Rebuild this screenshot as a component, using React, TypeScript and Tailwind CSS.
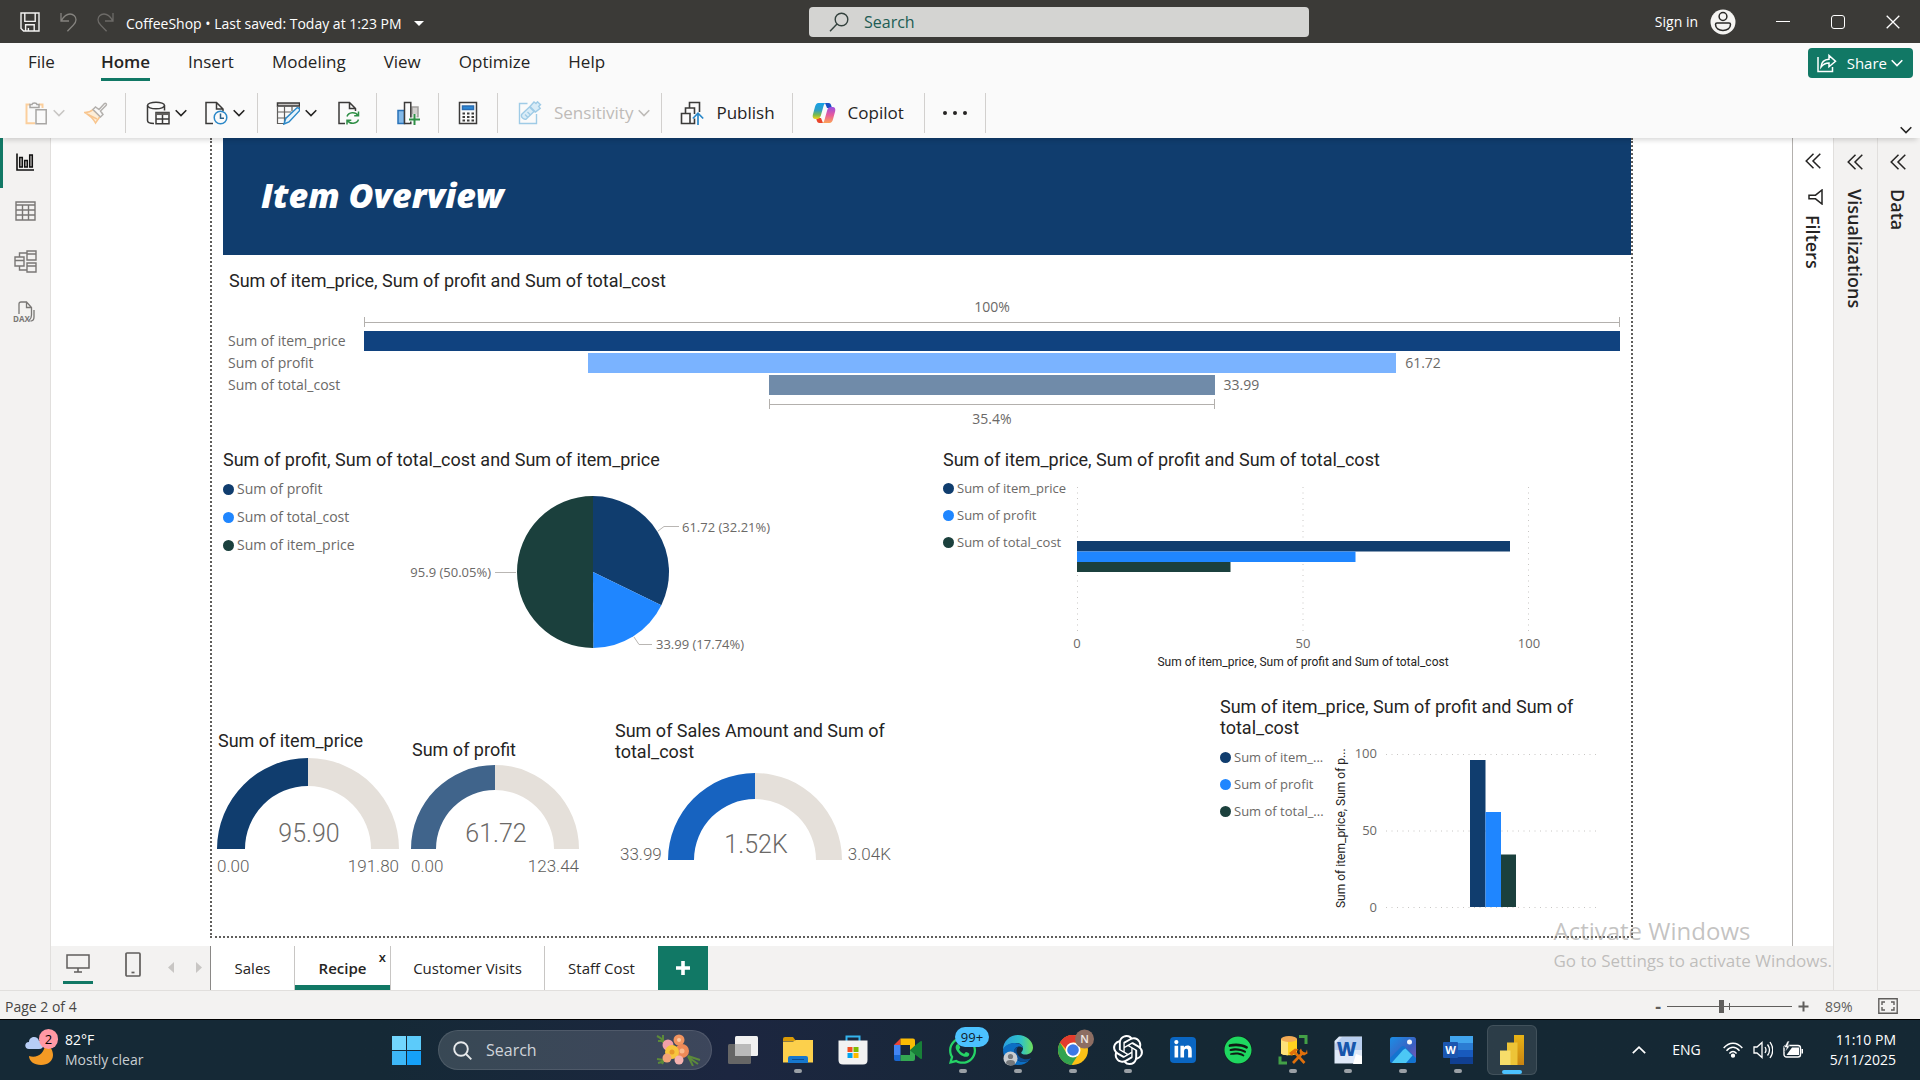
import React from "react";
import { FaSpotify, FaWhatsapp, FaLinkedinIn } from "react-icons/fa6";
import { SiOpenai } from "react-icons/si";

type Series = { label: string; value: number; fill: string };

const NAVY = "#103d6e";
const BLUE = "#1f86ff";
const GREEN = "#1b403d";

function Chevron({ className = "" }: { className?: string }) {
  return (
    <svg viewBox="0 0 12 8" className={`h-2 w-3 shrink-0 ${className}`} fill="none" stroke="currentColor" strokeWidth="1.6" aria-hidden="true">
      <path d="M.7 1.2 6 6.6l5.3-5.4" />
    </svg>
  );
}

function DoubleChevron() {
  return (
    <svg viewBox="0 0 16 16" className="size-4" fill="none" stroke="currentColor" strokeWidth="1.5" aria-hidden="true">
      <path d="M8.5.7 1.2 8l7.3 7.3M15.3.7 8 8l7.3 7.3" />
    </svg>
  );
}

function TitleBar() {
  return (
    <header className="flex h-[43px] shrink-0 items-center bg-[#3b3a37] text-white">
      <div className="flex min-w-0 flex-[789] items-center pl-5">
        <button aria-label="Save" className="size-5">
          <svg viewBox="0 0 20 20" className="size-5" fill="none" stroke="#f3f2f1" strokeWidth="1.4">
            <path d="M1 1h18v18H3.600L1 16.400zM4.800 1v8.400h10.400V1M5.600 19v-6.200h8.600V19M8.400 19v-3" />
          </svg>
        </button>
        <button aria-label="Undo" className="ml-5 h-5 w-[17px]">
          <svg viewBox="0 0 17 20" className="h-5 w-[17px]" fill="none" stroke="#85837f" strokeWidth="1.3">
            <path d="M1 1v8h8M1.300 8.600C4 4 6.800 2 10 2c3.600 0 6 2.600 6 5.700 0 2.400-1.200 3.900-2.800 5.500L7.400 19.300" />
          </svg>
        </button>
        <button aria-label="Redo" className="ml-5 h-5 w-[17px]">
          <svg viewBox="0 0 17 20" className="h-5 w-[17px]" fill="none" stroke="#6d6b68" strokeWidth="1.3">
            <path d="M16 1v8H8M15.700 8.600C13 4 10.200 2 7 2 3.400 2 1 4.600 1 7.700c0 2.400 1.200 3.900 2.800 5.500l5.800 6.100" />
          </svg>
        </button>
        <button className="ml-3 flex items-center gap-3 pt-1 text-[14px] whitespace-nowrap">
          CoffeeShop • Last saved: Today at 1:23 PM
          <svg viewBox="0 0 10 5" className="h-[5px] w-2.5" fill="#fff" aria-hidden="true"><path d="M0 0h10L5 5z" /></svg>
        </button>
      </div>
      <label className="flex h-[30px] min-w-0 flex-[480] items-center rounded-sm bg-[#d4d4d2] pl-5">
        <svg viewBox="0 0 20 20" className="size-5 shrink-0" fill="none" stroke="#33413d" strokeWidth="1.4" aria-hidden="true">
          <circle cx="12.500" cy="7.500" r="6.300" />
          <path d="M8 12 1 19.300" />
        </svg>
        <input aria-label="Search" placeholder="Search" className="ml-[15px] min-w-0 flex-1 bg-transparent text-[16px] outline-none placeholder:text-[#215c54]" />
      </label>
      <div className="flex min-w-0 flex-[591] items-center justify-end pr-5">
        <button className="flex items-center gap-3 text-[14px]">
          Sign in
          <svg viewBox="0 0 26 26" className="size-[26px]" aria-hidden="true">
            <circle cx="13" cy="13" r="12.500" fill="#f5f4f2" />
            <g fill="none" stroke="#2b2a28" strokeWidth="1.500">
              <circle cx="13" cy="7.500" r="3.900" />
              <path d="M7 14h12c1 0 1.500.6 1.500 1.600 0 3.600-3.300 6-7.500 6s-7.500-2.400-7.500-6C5.500 14.600 6 14 7 14z" />
            </g>
          </svg>
        </button>
        <button aria-label="Minimize" className="ml-10 h-3.5 w-3.5"><span className="block h-px bg-white" /></button>
        <button aria-label="Maximize" className="ml-[41px] h-3.5 w-3.5 rounded-[3px] border border-white" />
        <button aria-label="Close" className="ml-[41px] h-3.5 w-3.5">
          <svg viewBox="0 0 14 14" className="size-3.5" stroke="#fff" strokeWidth="1.300"><path d="m.7.7 12.600 12.600M13.300.7.7 13.300" /></svg>
        </button>
      </div>
    </header>
  );
}

function MenuBar() {
  const items = ["Insert", "Modeling", "View", "Optimize", "Help"];
  return (
    <nav className="flex h-12 items-start justify-between bg-[#fafafa] pr-[7px] pl-7 text-[#252423]">
      <div className="flex gap-[38px] pt-[5px] text-[17px] leading-7">
        <a href="#file">File</a>
        <a href="#home" className="ml-2 border-b-[3px] border-[#117865] pb-0.5 font-semibold">Home</a>
        {items.map((item) => (
          <a key={item} href={`#${item.toLowerCase()}`}>{item}</a>
        ))}
      </div>
      <button className="mt-[5px] flex h-[30px] items-center rounded bg-[#117865] pr-2.5 pl-[9px] text-[15px] text-white">
        <svg viewBox="0 0 20 20" className="size-5" fill="none" stroke="#fff" strokeWidth="1.500" aria-hidden="true">
          <path d="M1 4v14.500h14.500V14M4 14c.4-5 3.500-7.500 8-7.700V2.500l6.500 5.700L12 13.700V10c-3.400 0-5.800 1.200-8 4z" />
        </svg>
        <span className="ml-2.5">Share</span>
        <Chevron className="ml-1" />
      </button>
    </nav>
  );
}

const Sep = () => <span className="h-10 w-px shrink-0 bg-[#d2d0ce]" />;

function IconButton({ label, className = "", children, menu = false }: { label: string; className?: string; children: React.ReactNode; menu?: boolean }) {
  return (
    <button aria-label={label} className={`flex items-center gap-[5px] ${className}`}>
      <svg viewBox="0 0 24 24" className="size-6 shrink-0" fill="none" stroke="#3b3a39" strokeWidth="1.500">{children}</svg>
      {menu && <Chevron />}
    </button>
  );
}

function Ribbon() {
  return (
    <div className="relative z-10 flex h-[47px] shrink-0 items-center bg-[#fafafa] pb-1 pl-6 text-[17px] text-[#252423] shadow-[0_5px_5px_-3px_rgba(0,0,0,0.16)]">
      <IconButton label="Paste" menu className="text-[#c8c6c4]">
        <g stroke="#fbcf9d"><path d="M6 3.500H2.500v18.800H11" strokeWidth="2" /><path d="M15 3.500h3.500V7" strokeWidth="2" /></g>
        <path d="M6 6.500v-3h2c.3-2 4.600-2 5 0h2v3zM12 8.800h10.200v14H12z" stroke="#a8a6a4" fill="#fafafa" />
      </IconButton>
      <IconButton label="Format painter" className="mr-[17px] ml-[19px]">
        <path d="M.8 11.500c3.700 0 6-1 8.200-3l7 7-4.500 6.500c-2.500-5-6.200-8-10.700-10.500z" fill="#fdeed9" stroke="#f8c58e" />
        <path d="M4 13.500 13 18" stroke="#f8c58e" />
        <path d="m9 8.500 2.500-2.500 3.500 2.500L20.500 2.500c1-.8 2.500.6 1.700 1.700L16.500 10l2.500 3.500-2.500 2.500z" stroke="#b3b0ad" fill="#fafafa" />
      </IconButton>
      <Sep />
      <IconButton label="Get data" menu className="ml-5">
        <ellipse cx="10" cy="4.500" rx="8.500" ry="3.300" />
        <path d="M1.500 4.500v15c0 2 3 3 6.500 3M18.500 4.500v5" />
        <path d="M10 11.500h13v11.300H10z" fill="#fafafa" /><path d="M10 12.800h13" strokeWidth="2.500" stroke="#605e5c" /><path d="M10 18h13M16.500 14v9" />
      </IconButton>
      <IconButton label="Recent sources" menu className="mr-3 ml-[17px]">
        <path d="M9 22.500H2V1.500h10.500l6.500 6.500v2M12.500 1.500V8H19" />
        <circle cx="16.500" cy="16.500" r="6.300" stroke="#2b88c8" fill="#fafafa" /><path d="M16.500 12.500v4.700H20" stroke="#2b5f86" />
      </IconButton>
      <Sep />
      <IconButton label="Transform data" menu className="ml-[18px]">
        <path d="M1.500 2h22v3h-22z" fill="#c8c6c4" />
        <path d="M1.500 5v17.500h7M23.500 5v4M1.500 11h14M1.500 17H10M8.500 5v16M16 5v5" stroke="#605e5c" strokeWidth="1.200" />
        <path d="m8 23 1.700-5.500L20.500 7.200c1.700-1.300 4 .8 2.800 2.700L13 20.900z" stroke="#2b88c8" fill="#e8f4fc" />
      </IconButton>
      <IconButton label="Refresh" className="mr-4 ml-[19px]">
        <path d="M9 22.500H3V1.500h10.500l6 6V10M13.500 1.500v6h6" />
        <path d="M11 15.500c1.500-4.500 8.500-5 11-1M22.500 10.500v4.300h-4.300M22.500 18.500c-1.500 4.500-8.500 5-11 1M11 23.500v-4.300h4.300" stroke="#2f8f46" />
      </IconButton>
      <Sep />
      <IconButton label="New visual" className="mr-[18px] ml-[19px]">
        <path d="M16 6h6v10h-6z" fill="#d2d0ce" stroke="#a19f9d" />
        <path d="M2 9.500h6.500v13H2z" fill="#83b9e8" stroke="#2872b8" />
        <path d="M8.500 1.500h6.300v21H8.500z" fill="#fafafa" />
        <path d="M18.500 13v11M13 18.500h11" stroke="#fafafa" strokeWidth="4" /><path d="M18.500 13v11M13 18.500h11" stroke="#2f8f46" strokeWidth="2" />
      </IconButton>
      <Sep />
      <IconButton label="New measure" className="mx-[17px]">
        <path d="M3.500 1.500h17v21h-17z" /><path d="M6.500 5h11v3.500h-11z" fill="#2b88d8" stroke="#2b6cb0" />
        <path d="M6.500 12.500h2.500m2 0h2.500m2 0H18m-11.500 3.500H9m2 0h2.500m2 0H18m-11.500 3.500H9m2 0h2.500m2 0H18" strokeWidth="2" />
      </IconButton>
      <Sep />
      <button disabled className="mr-[11px] ml-5 flex items-center text-[#bebbb8]">
        <svg viewBox="0 0 24 24" className="size-6" fill="none" stroke="#9fcbe6" strokeWidth="1.400" aria-hidden="true">
          <path d="M9.500 2.500H1.500v20h17V13" />
          <path d="m4 13 7.500-7 4.500 4.500-7.500 7.300c-2.500 1.500-6.500-2-4.500-4.800zM12 5.500l4-4.500 2 1.500L19.500.800l3 3-1.800 1.500 1.500 2L17.500 11zM7 13.500l2.500 2.500m0-5 2.500 2.500" fill="#d9ecf7" />
        </svg>
        <span className="mr-[5px] ml-3">Sensitivity</span>
        <Chevron />
      </button>
      <Sep />
      <button className="mr-[17px] ml-[18px] flex items-center gap-3">
        <svg viewBox="0 0 24 24" className="size-6" fill="none" stroke="#3b3a39" strokeWidth="1.600" aria-hidden="true">
          <path d="M1.500 12.500h8.500v10H1.500zM5.500 12.500V7h9v6M9.500 7V1.500h10V11M10 22.500h4.500v-5" />
          <path d="M18 24V12.500M12.800 17.500l5.200-5.300 5.200 5.300" stroke="#2b88c8" strokeWidth="1.700" />
        </svg>
        Publish
      </button>
      <Sep />
      <button className="mr-5 ml-[19px] flex items-center gap-3">
        <svg viewBox="0 0 24 24" className="size-6" aria-hidden="true">
          <defs>
            <linearGradient id="cpa" x1="0" y1="0" x2="0" y2="1"><stop offset="0" stopColor="#16a0e8" /><stop offset=".45" stopColor="#2e9fc4" /><stop offset=".75" stopColor="#7dbb4a" /><stop offset="1" stopColor="#f7d21b" /></linearGradient>
            <linearGradient id="cpb" x1="0" y1="0" x2="0" y2="1"><stop offset="0" stopColor="#9a4fe0" /><stop offset=".5" stopColor="#e75a9c" /><stop offset="1" stopColor="#fca356" /></linearGradient>
          </defs>
          <path d="M13 2h3.500c1.800 0 2.400 1.300 2.900 3l.6 2H15z" fill="#1b4fc4" />
          <path d="M11 22H7.500c-1.800 0-2.400-1.300-2.900-3L4 17h5z" fill="#e8452c" />
          <path d="M6.500 2h7.300c-1.600.5-2 2-2.400 3.500l-2.600 9.300C8.200 16.800 7 18 5 18H3.500C1 18 .2 16 .9 13.500L3 5.800C3.700 3.300 4.700 2 6.500 2z" fill="url(#cpa)" />
          <path d="M17.500 22h-7.300c1.600-.5 2-2 2.400-3.500l2.600-9.300C15.800 7.200 17 6 19 6h1.500c2.500 0 3.300 2 2.600 4.500L21 18.200c-.7 2.500-1.700 3.800-3.500 3.800z" fill="url(#cpb)" />
        </svg>
        Copilot
      </button>
      <Sep />
      <button aria-label="More options" className="mx-[18px] flex w-6 justify-between">
        <i className="size-1 rounded-full bg-[#252423]" /><i className="size-1 rounded-full bg-[#252423]" /><i className="size-1 rounded-full bg-[#252423]" />
      </button>
      <Sep />
      <button aria-label="Collapse ribbon" className="mt-auto mr-2 ml-auto"><Chevron /></button>
    </div>
  );
}

function ViewRail() {
  return (
    <nav aria-label="Views" className="flex w-[51px] shrink-0 flex-col border-r border-[#e1dfdd] bg-[#f3f2f1]">
      <button aria-label="Report view" className="flex h-[50px] items-center border-l-[3px] border-[#117865] pb-0.5 pl-[13px]">
        <svg viewBox="0 0 18 18" className="size-[18px]" fill="#a19f9d" stroke="#111" strokeWidth="1.300">
          <path d="M1 .5V17h17" fill="none" strokeWidth="1.600" /><path d="M3.600 4.500h2.800V14H3.600zM8.600 7.500h2.800V14H8.600zM13.600 2h2.800v12h-2.800z" />
        </svg>
      </button>
      <button aria-label="Table view" className="flex h-[46px] items-center pl-[15px]">
        <svg viewBox="0 0 21 20" className="h-5 w-[21px]" fill="none" stroke="#797775" strokeWidth="1.400">
          <path d="M1 1h19v18H1zM1 4h19M1 9h19M1 14h19M7.500 4v15M13.500 4v15" />
        </svg>
      </button>
      <button aria-label="Model view" className="flex h-[54px] items-center pl-3.5">
        <svg viewBox="0 0 23 23" className="size-[23px]" fill="none" stroke="#797775" strokeWidth="1.400">
          <path d="M13 1h9v9h-9zM13 4h9M13 13h9v9h-9zM13 16h9M1 7h9v9H1zM1 10.500h9M5.500 7V3H13M5.500 16v4H13" />
        </svg>
      </button>
      <button aria-label="DAX query view" className="flex h-12 items-center pl-[13px]">
        <svg viewBox="0 0 22 22" className="size-[22px]" fill="none" stroke="#797775" strokeWidth="1.300">
          <path d="M6 13V3c0-1.200.8-2 2-2h5.500l5 5.500V14c0 2-.5 4-2.500 5.500M13.500 1v5.500h5M21 9v7c0 2-1 4-3.500 4" />
          <text x="0" y="20.500" fontSize="8" fontWeight="700" fill="#797775" stroke="none">DAX</text>
        </svg>
      </button>
    </nav>
  );
}

function VisualTitle({ children, className = "" }: { children: React.ReactNode; className?: string }) {
  return <h2 className={`font-['Roboto',sans-serif] text-[18px] leading-[21px] text-[#252423] ${className}`}>{children}</h2>;
}

function Bracket({ ratio }: { ratio: number }) {
  return (
    <div className="mx-auto flex h-2.5 items-center border-x border-[#b3b0ad]" style={{ width: `${ratio * 100}%` }}>
      <span className="h-px flex-1 bg-[#b3b0ad]" />
    </div>
  );
}

function Funnel() {
  const rows: Series[] = [
    { label: "Sum of item_price", value: 95.9, fill: "#10427f" },
    { label: "Sum of profit", value: 61.72, fill: "#7ab3ff" },
    { label: "Sum of total_cost", value: 33.99, fill: "#708ba9" },
  ];
  const max = rows[0].value;
  return (
    <section className="mt-[15px] pr-[11px] pl-4 text-[14px] leading-5 text-[#6b6967]">
      <VisualTitle className="pl-px">Sum of item_price, Sum of profit and Sum of total_cost</VisualTitle>
      <div className="mt-1.5 pl-[136px] text-center">100%</div>
      <div className="pl-[136px]"><Bracket ratio={1} /></div>
      <div className="my-1 flex flex-col gap-0.5">
        {rows.map((r, i) => (
          <div key={r.label} className="flex h-5 items-center">
            <span className="w-[136px] shrink-0 pb-px whitespace-nowrap">{r.label}</span>
            <div className="flex h-full flex-1">
              <span className="flex-1" />
              <span className="h-full" style={{ width: `${(r.value / max) * 100}%`, background: r.fill }} />
              <span className="flex-1">{i > 0 && <span className="ml-[9px]">{r.value}</span>}</span>
            </div>
          </div>
        ))}
      </div>
      <div className="pl-[136px]"><Bracket ratio={33.99 / max} /></div>
      <div className="pl-[136px] text-center">35.4%</div>
    </section>
  );
}

function Legend({ items, small = false, className = "" }: { items: [string, string][]; small?: boolean; className?: string }) {
  return (
    <ul className={`flex shrink-0 flex-col text-[#6b6967] ${small ? "gap-2 text-[13px] leading-[19px]" : "gap-2 text-[14px] leading-5"} ${className}`}>
      {items.map(([name, fill]) => (
        <li key={name} className="flex items-center gap-[3px] whitespace-nowrap">
          <i className="size-[11px] shrink-0 rounded-full" style={{ background: fill }} />
          {name}
        </li>
      ))}
    </ul>
  );
}

function PieVisual() {
  const slices: Series[] = [
    { label: "profit", value: 61.72, fill: NAVY },
    { label: "total_cost", value: 33.99, fill: BLUE },
    { label: "item_price", value: 95.9, fill: GREEN },
  ];
  const total = slices.reduce((s, x) => s + x.value, 0);
  const r = 76;
  let from = 0;
  return (
    <section>
      <VisualTitle>Sum of profit, Sum of total_cost and Sum of item_price</VisualTitle>
      <div className="mt-2 flex">
        <Legend className="w-[182px] pt-px" items={[["Sum of profit", NAVY], ["Sum of total_cost", BLUE], ["Sum of item_price", GREEN]]} />
        <svg viewBox="-188 -94 374 190" width="374" height="190" className="text-[13px]" fill="#6b6967" role="img" aria-label="Pie chart">
          {slices.map((s) => {
            const a = (from / total) * 2 * Math.PI;
            from += s.value;
            const b = (from / total) * 2 * Math.PI;
            const d = `M0 0L${r * Math.sin(a)} ${-r * Math.cos(a)}A${r} ${r} 0 ${b - a > Math.PI ? 1 : 0} 1 ${r * Math.sin(b)} ${-r * Math.cos(b)}Z`;
            return <path key={s.label} d={d} fill={s.fill} />;
          })}
          <g fill="none" stroke="#b9b6b3">
            <path d="M65-41l6-4.500h15M41 65l5 7.500h13M-98 .5h21" />
          </g>
          <text x="89" y="-40">61.72 (32.21%)</text>
          <text x="63" y="77">33.99 (17.74%)</text>
          <text x="-102" y="5" textAnchor="end">95.9 (50.05%)</text>
        </svg>
      </div>
    </section>
  );
}

function BarVisual() {
  return (
    <section>
      <VisualTitle>Sum of item_price, Sum of profit and Sum of total_cost</VisualTitle>
      <div className="mt-2 flex">
        <Legend small className="w-[124px] pt-px" items={[["Sum of item_price", NAVY], ["Sum of profit", BLUE], ["Sum of total_cost", GREEN]]} />
        <svg viewBox="-10 -1 490 192" width="490" height="192" className="text-[13px]" fill="#6b6967" textAnchor="middle" role="img" aria-label="Bar chart">
          <g stroke="#c8c6c4" strokeDasharray="1 4.500">
            <path d="M.5 8v145M226 8v145M451.500 8v145" />
          </g>
          <path d="M0 62h433v10.500H0z" fill={NAVY} />
          <path d="M0 72.500h278.500V83H0z" fill={BLUE} />
          <path d="M0 83h153.500v10H0z" fill={GREEN} />
          <text x="0" y="169">0</text>
          <text x="226" y="169">50</text>
          <text x="452" y="169">100</text>
          <text x="226" y="187" fill="#252423" className="font-['Roboto',sans-serif] text-[12px]">Sum of item_price, Sum of profit and Sum of total_cost</text>
        </svg>
      </div>
    </section>
  );
}

function GaugeArc({ r, inner, fill, value }: { r: number; inner: number; fill: string; value: string }) {
  return (
    <svg viewBox={`${-r} ${-r} ${2 * r} ${r}`} width={2 * r} height={r} className="shrink-0" role="img" aria-label={value}>
      <path d={`M${-r} 0A${r} ${r} 0 0 1 0 ${-r}V${-inner}A${inner} ${inner} 0 0 0 ${-inner} 0Z`} fill={fill} />
      <path d={`M0 ${-r}A${r} ${r} 0 0 1 ${r} 0H${inner}A${inner} ${inner} 0 0 0 0 ${-inner}Z`} fill="#e5e0da" />
      <text x="1" y="-7" textAnchor="middle" fill="#6b6967" className="font-['Roboto',sans-serif] text-[25px] font-light">{value}</text>
    </svg>
  );
}

const gaugeText = "font-['Roboto',sans-serif] text-[17px] font-light text-[#605e5c]";

function ColumnVisual() {
  return (
    <section className="mt-[26px] mr-[11px] ml-auto w-[400px]">
      <VisualTitle className="pr-5">Sum of item_price, Sum of profit and Sum of total_cost</VisualTitle>
      <div className="mt-[5px] flex">
        <Legend small className="w-[111px] pt-[5px]" items={[["Sum of item_...", NAVY], ["Sum of profit", BLUE], ["Sum of total_...", GREEN]]} />
        <svg viewBox="0 0 280 172" width="280" height="172" className="text-[13px]" fill="#6b6967" textAnchor="end" role="img" aria-label="Column chart">
          <g stroke="#c8c6c4" strokeDasharray="1 4.500"><path d="M55 11.500h214M55 88h214M55 164.500h214" /></g>
          <text x="46" y="15">100</text>
          <text x="46" y="92">50</text>
          <text x="46" y="169">0</text>
          <path d="M139 17h15.500v147H139z" fill={NAVY} />
          <path d="M154.500 69H170v95h-15.500z" fill={BLUE} />
          <path d="M170 111.500h15V164h-15z" fill={GREEN} />
          <text transform="rotate(-90 14 165)" x="14" y="165" textAnchor="start" fill="#252423" className="font-['Roboto',sans-serif] text-[12px]">Sum of item_price, Sum of p...</text>
        </svg>
      </div>
    </section>
  );
}

function ReportPage() {
  return (
    <article className="mx-[159px] mb-2 flex-1 border-x-2 border-b-2 border-dotted border-[#605e5c]">
      <div className="ml-[11px] flex h-[117px] items-center bg-[#103d6e] pb-0.5 pl-[38px]">
        <h1 className="text-[34px] font-extrabold text-white italic">Item Overview</h1>
      </div>
      <Funnel />
      <div className="mt-5 grid grid-cols-[720fr_688fr] pl-[11px]">
        <PieVisual />
        <BarVisual />
      </div>
      <div className="flex pl-[5px]">
        <section className="mt-[60px] w-[182px]">
          <VisualTitle className="mb-[7px] pl-px">Sum of item_price</VisualTitle>
          <GaugeArc r={91} inner={63} fill={NAVY} value="95.90" />
          <div className={`mt-[7px] flex justify-between leading-5 ${gaugeText}`}><span>0.00</span><span>191.80</span></div>
        </section>
        <section className="mt-[69px] ml-3 w-[168px]">
          <VisualTitle className="mb-[5px] pl-px">Sum of profit</VisualTitle>
          <GaugeArc r={84} inner={59} fill="#40648b" value="61.72" />
          <div className={`mt-[7px] flex justify-between leading-5 ${gaugeText}`}><span>0.00</span><span>123.44</span></div>
        </section>
        <section className="mt-[50px] ml-9 w-[285px]">
          <VisualTitle className="mb-[11px]">Sum of Sales Amount and Sum of total_cost</VisualTitle>
          <div className={`flex items-end gap-1.5 pl-[5px] leading-3 ${gaugeText}`}>
            <span>33.99</span>
            <GaugeArc r={87} inner={61} fill="#1763c0" value="1.52K" />
            <span>3.04K</span>
          </div>
        </section>
        <ColumnVisual />
      </div>
    </article>
  );
}

function SidePane({ title, className, children }: { title: string; className: string; children?: React.ReactNode }) {
  return (
    <aside className={`flex shrink-0 flex-col items-center border-l text-[#252423] ${className}`}>
      <button aria-label={`Expand ${title}`}><DoubleChevron /></button>
      {children}
      <h2 className="text-[18px] leading-6 font-semibold [writing-mode:vertical-rl]">{title}</h2>
    </aside>
  );
}

function PageTabs() {
  return (
    <div className="flex h-11 shrink-0 bg-[#f3f2f1] text-[15px] text-[#252423]">
      <div className="flex w-[159px] items-start pl-3">
        <button aria-label="Desktop layout" className="flex h-[38px] w-[30px] flex-col items-center justify-between border-b-[3px] border-[#117865] pt-2">
          <svg viewBox="0 0 24 19" className="h-[19px] w-6" fill="none" stroke="#605e5c" strokeWidth="1.500"><path d="M1 1h22v13H1zM12 14v4M8 18h8" /></svg>
        </button>
        <button aria-label="Mobile layout" className="mt-1.5 ml-8">
          <svg viewBox="0 0 16 25" className="h-[25px] w-4" fill="none" stroke="#605e5c" strokeWidth="1.700"><rect x="1" y="1" width="14" height="23" rx="1" /><path d="M6.500 20.500h3" /></svg>
        </button>
        <button aria-label="Previous page" className="mt-4 ml-[27px]"><svg viewBox="0 0 6 11" className="h-[11px] w-1.5" fill="#c8c6c4"><path d="M6 0v11L0 5.500z" /></svg></button>
        <button aria-label="Next page" className="mt-4 ml-[22px]"><svg viewBox="0 0 6 11" className="h-[11px] w-1.5" fill="#c8c6c4"><path d="M0 0v11l6-5.500z" /></svg></button>
      </div>
      <button className="w-[85px] border-x border-[#c8c6c4] border-l-[#8a8886] bg-white">Sales</button>
      <div className="relative flex w-24 border-r border-[#c8c6c4] bg-white">
        <button className="flex-1 border-b-[5px] border-[#117865] pt-[5px] font-semibold">Recipe</button>
        <button aria-label="Delete page" className="absolute top-px right-1 text-[13px] leading-5 font-semibold">x</button>
      </div>
      <button className="w-[154px] border-r border-[#c8c6c4] bg-white">Customer Visits</button>
      <button className="w-[113px] bg-white">Staff Cost</button>
      <button aria-label="New page" className="flex w-[50px] items-center justify-center bg-[#117865]">
        <svg viewBox="0 0 14 14" className="size-3.5" stroke="#fff" strokeWidth="3.600"><path d="M7 0v14M0 7h14" /></svg>
      </button>
    </div>
  );
}

function StatusBar() {
  return (
    <footer className="flex h-[29px] shrink-0 items-center border-t border-[#e1dfdd] bg-[#f3f2f1] pt-0.5 pl-[5px] text-[14px] text-[#484644]">
      <span>Page 2 of 4</span>
      <button aria-label="Zoom out" className="ml-auto text-[18px] leading-5 font-bold text-[#605e5c]">-</button>
      <label className="relative mx-1.5 flex w-[125px] items-center">
        <input
          type="range" aria-label="Zoom" min={0} max={100} defaultValue={43}
          className="h-3.5 w-full appearance-none bg-transparent [&::-webkit-slider-runnable-track]:h-px [&::-webkit-slider-runnable-track]:bg-[#605e5c] [&::-webkit-slider-thumb]:-mt-1.5 [&::-webkit-slider-thumb]:h-[13px] [&::-webkit-slider-thumb]:w-[5px] [&::-webkit-slider-thumb]:appearance-none [&::-webkit-slider-thumb]:bg-[#605e5c]"
        />
        <span className="absolute left-[62px] h-[7px] w-px bg-[#605e5c]" />
      </label>
      <button aria-label="Zoom in" className="text-[#605e5c]"><svg viewBox="0 0 11 11" className="size-[11px]" stroke="currentColor" strokeWidth="2"><path d="M5.500.5v10M.5 5.500h10" /></svg></button>
      <span className="ml-4 w-[53px] text-[#605e5c]">89%</span>
      <button aria-label="Fit to page" className="mr-[22px]">
        <svg viewBox="0 0 20 16" className="h-4 w-5" fill="none" stroke="#605e5c" strokeWidth="1.400"><path d="M.8.8h18.400v14.400H.8zM7 4H4v3M13 4h3v3M7 12H4V9M13 12h3V9" /></svg>
      </button>
    </footer>
  );
}

function FolderIcon() {
  return (
    <svg viewBox="0 0 30 28" className="h-7 w-[30px]"><path d="M0 3q0-2 2-2h8l3 4H0z" fill="#d99a06" /><path d="M0 5.500h10L13 4h17v22.500H0z" fill="#fcd04c" /><path d="M5 27v-5q0-2 2-2h16q2 0 2 2v5z" fill="#1677cd" /><path d="M9 23.500h12" stroke="#0a4d91" /></svg>
  );
}

function AppIcon({ name }: { name: string }) {
  switch (name) {
    case "Task view":
      return <svg viewBox="0 0 30 28" className="h-7 w-[30px]"><rect y="8" width="23" height="20" rx="1.500" fill="#666" /><rect x="7" width="23" height="20" rx="1.500" fill="#f1f1f1" /><path d="M7 8h16v12H7z" fill="#bababa" /></svg>;
    case "File Explorer":
      return <FolderIcon />;
    case "Microsoft Store":
      return <svg viewBox="0 0 30 30" className="size-[30px]"><path d="M8.500 6V1.500h13V6" fill="none" stroke="#34b4ee" strokeWidth="2" /><path d="M.5 5.500h29V25q0 4.500-4.500 4.500H5Q.5 29.500.5 25z" fill="#f2f2f2" /><path d="M9.500 12h5v5h-5z" fill="#f25022" /><path d="M15.500 12h5v5h-5z" fill="#7fba00" /><path d="M9.500 18h5v5h-5z" fill="#00a4ef" /><path d="M15.500 18h5v5h-5z" fill="#ffb900" /></svg>;
    case "Google Meet":
      return <svg viewBox="0 0 28 24" className="h-6 w-7"><path d="M0 7 6.500.5V7z" fill="#ea4335" /><path d="M0 7h6.500v10H0z" fill="#4285f4" /><path d="M0 17h6.500v6H2q-2 0-2-2z" fill="#1967d2" /><path d="M6.500.5H19q2 0 2 2V9l-5 3.500V7H6.500z" fill="#fbbc04" /><path d="M6.500 17H16v-5l5 4v5q0 2-2 2H6.500z" fill="#34a853" /><path d="m16 12 5-4.500 5.500-4.300q1.500-.7 1.500.8v16q0 1.500-1.500.7L21 16.500z" fill="#188038" /></svg>;
    case "WhatsApp":
      return (
        <span className="relative">
          <FaWhatsapp className="size-[31px] text-[#25d366]" />
          <span className="absolute -top-2 left-2 flex h-5 w-[34px] items-center justify-center rounded-full bg-[#4cc2ff] text-[13px] text-[#10202c]">99+</span>
        </span>
      );
    case "Edge":
      return (
        <svg viewBox="0 0 32 32" className="size-8">
          <defs><linearGradient id="eg" x1="0" x2="1"><stop offset="0" stopColor="#2a9fe0" /><stop offset=".6" stopColor="#2fc2c8" /><stop offset="1" stopColor="#6fe05a" /></linearGradient></defs>
          <path d="M1 16C1 7 8 1 16 1s15 6 15 12.500c0 4.500-3.500 7-7.500 7-3 0-5-1-4-2.500 1-1.200 1.500-2 1.500-3.500C21 11 18 9 14 9 8 9 3 12 1 16z" fill="url(#eg)" />
          <path d="M1 16c1.500-4.500 6.500-7.500 12-7 4 .3 7.500 2 8 5-1.200-1.200-3-1.800-4.500-1.500-4 .8-5.500 5-4 9.500 2 6 9 7.500 15 4C25 29 21 31 16 31 7.500 31 1 24.500 1 16z" fill="#0c6fc4" />
          <path d="M12.500 22c2 6 9 7.500 15 4l1.500-1.800c-6 2.500-11.500.5-14-5.200-.8-2-.5-4.500 1-6.300-4 1-5 5-3.500 9.300z" fill="#0d4f95" />
          <circle cx="8.500" cy="24.500" r="7" fill="#c9cdd1" /><circle cx="8.500" cy="22.500" r="2.600" fill="#74787c" /><path d="M4 29q0-3 4.500-3t4.500 3-4.500 2.300S4 30.500 4 29z" fill="#74787c" />
        </svg>
      );
    case "Chrome":
      return (
        <svg viewBox="0 0 38 36" className="-mt-1.5 ml-1.5 h-9 w-[38px]">
          <g transform="translate(0 5)">
            <circle cx="16" cy="16" r="15" fill="#fbc116" />
            <path d="M3 8.500A15 15 0 0 1 29 8.500H16z" fill="#e33b2e" />
            <path d="M3 8.500 10 20l6 3.500-5.500 6.500A15 15 0 0 1 3 8.500z" fill="#31a350" /><path d="M3 8.500A15 15 0 0 1 16 1v8.500l-6.500 6z" fill="#e33b2e" /><path d="M22 19.500 14.500 31q-2-.2-4-1L16 22z" fill="#31a350" />
            <circle cx="16" cy="16" r="7.500" fill="#fff" /><circle cx="16" cy="16" r="5.800" fill="#3b78e7" />
          </g>
          <circle cx="27.500" cy="10" r="9.500" fill="#8d6e63" /><text x="27.500" y="14" textAnchor="middle" fontSize="11" fontWeight="600" fill="#f0e8e5">N</text>
        </svg>
      );
    case "ChatGPT":
      return <SiOpenai className="size-[30px] text-white" />;
    case "LinkedIn":
      return <span className="flex size-[26px] items-center justify-center rounded-sm bg-[#0a66c2]"><FaLinkedinIn className="size-5 text-white" /></span>;
    case "Spotify":
      return <span className="rounded-full bg-[#101a14]"><FaSpotify className="size-7 text-[#1ed760]" /></span>;
    case "SQL tools":
      return (
        <svg viewBox="0 0 30 30" className="size-[30px]">
          <path d="M21 1.500h7V9M9 28H2v-6.500" fill="none" stroke="#43a047" strokeWidth="3" />
          <path d="M3 4v14c0 3 16 3 16 0V4z" fill="#ffd21f" /><path d="M3 4v14c0 1.500 3 2.200 7 2.200V4z" fill="#ffe27a" /><ellipse cx="11" cy="4" rx="8" ry="3" fill="#f3ab55" />
          <path d="m15 28 10.500-11M26.500 28 16 16.500" stroke="#e0700c" strokeWidth="2.600" fill="none" />
          <path d="m11 18 6-4.500 3.500 1-5 4.500-1.500 2zM23 13.500l1.500 3.500 3.500.5 1-3 .5 4-3.500 2-4-2-.5-3z" fill="#e0700c" />
        </svg>
      );
    case "Word document":
      return (
        <svg viewBox="0 0 28 28" className="size-7"><path d="M5 .5h23v27H.5V5z" fill="#dfe9f8" /><path d="M1 8 8 1h20v13H1z" fill="#b9cff0" /><path d="M19 28l3-10 6 2v8z" fill="#fff" /><text x="12.500" y="20" textAnchor="middle" fontSize="19" fontWeight="800" fill="#1756ac">W</text></svg>
      );
    case "Photos":
      return (
        <svg viewBox="0 0 26 26" className="size-[26px]">
          <defs><linearGradient id="ph" x1="0" y1="0" x2="1" y2="1"><stop offset="0" stopColor="#1b8ee6" /><stop offset=".6" stopColor="#3c5fc0" /><stop offset="1" stopColor="#8757b5" /></linearGradient></defs>
          <rect width="26" height="26" rx="2.500" fill="url(#ph)" /><path d="M0 21 11.500 9.500q1.500-1.200 3 0L26 21v2.500q0 2.500-2.500 2.500h-21Q0 26 0 23.500z" fill="#1274d0" /><path d="m2 25.500 11-12.500q1-1 2.500-1.500l7 7L16 26H2.500z" fill="#4cc8f5" /><circle cx="19.500" cy="5" r="2.500" fill="#f2f4f8" />
        </svg>
      );
    case "Word":
      return (
        <svg viewBox="0 0 30 28" className="h-7 w-[30px]"><path d="M7 0h23v7H7z" fill="#41a5ee" /><path d="M7 7h23v7H7z" fill="#2b7cd3" /><path d="M7 14h23v7H7z" fill="#185abd" /><path d="M7 21h23v7H7z" fill="#103f91" /><rect y="6" width="15" height="16" rx="1" fill="#1b56b0" /><text x="7.500" y="18" textAnchor="middle" fontSize="11" fontWeight="700" fill="#fff">W</text></svg>
      );
    default:
      return (
        <svg viewBox="0 0 24 30" className="h-[30px] w-6">
          <defs><linearGradient id="pb" x1="0" y1="0" x2="0" y2="1"><stop offset="0" stopColor="#e8b315" /><stop offset="1" stopColor="#c98412" /></linearGradient></defs>
          <path d="M14 0h10v30H14z" fill="url(#pb)" /><path d="M7 7.500h10.500V30H7z" fill="#edc437" /><path d="M0 15.500h10.500V30H0z" fill="#f7dd6a" />
        </svg>
      );
  }
}

function Taskbar() {
  const apps = ["Task view", "File Explorer", "Microsoft Store", "Google Meet", "WhatsApp", "Edge", "Chrome", "ChatGPT", "LinkedIn", "Spotify", "SQL tools", "Word document", "Photos", "Word", "Power BI"];
  const running = ["File Explorer", "WhatsApp", "Edge", "Chrome", "ChatGPT", "SQL tools", "Word document", "Photos", "Word"];
  return (
    <div className="grid h-[61px] shrink-0 grid-cols-[1fr_auto_1fr] items-center border-t border-black bg-linear-to-r from-[#152936] from-20% via-[#1c2640] via-38% to-[#152834] to-60% text-[14px] leading-5 text-white">
      <button className="flex items-center gap-[7px] pl-[25px] text-left">
        <span className="relative -mt-1">
          <svg viewBox="0 0 33 36" className="h-9 w-[33px]" aria-hidden="true">
            <path d="M4 26C12 29 20 23 20 14c6 2 8 7 8 11 0 6-5 10-12 10C9 35 4 31 4 26z" fill="#f49a24" />
            <path d="M4 19c-5 0-5-7 0-7 0-6 9-7 10-1 6-1 6 8 0 8z" fill="#b7cdf5" />
          </svg>
          <span className="absolute -top-px right-0 flex h-5 w-[19px] items-center justify-center rounded-full bg-[#ff99a4] text-[13px] text-black">2</span>
        </span>
        <span>82°F<br /><span className="text-[#c9ced2]">Mostly clear</span></span>
      </button>
      <div className="flex items-center pl-[11px]">
        <button aria-label="Start" className="mr-[17px] grid size-[29px] grid-cols-2 gap-px">
          <i className="bg-[#72d6fd]" /><i className="bg-[#5ccbfa]" /><i className="bg-[#3db7f7]" /><i className="bg-[#15a0f8]" />
        </button>
        <label className="mr-[3px] flex h-10 w-[274px] items-center rounded-full border border-white/10 bg-white/15 pr-2.5 pl-3.5">
          <svg viewBox="0 0 19 19" className="size-[19px]" fill="none" stroke="#e8eaec" strokeWidth="1.900" aria-hidden="true"><circle cx="8" cy="8" r="6.800" /><path d="m13 13 5.300 5.300" /></svg>
          <input aria-label="Search Windows" placeholder="Search" className="ml-3.5 w-0 flex-1 bg-transparent text-[16px] outline-none placeholder:text-[#cfd4da]" />
          <svg viewBox="0 0 46 32" className="h-8 w-[46px]" aria-hidden="true">
            <g stroke="#5c8a3a" strokeWidth="2" fill="none"><path d="M2 2q6 3 9 8M3 7h6M8 1v8M3 29q6-1 8-5M7 30l3-6M33 22l12 4M33 23l10 7M33 22l5 10M2 25l7 1" /></g>
            <circle cx="24" cy="6" r="5.500" fill="#f0935f" /><circle cx="13" cy="11" r="5.500" fill="#f2a0a8" /><circle cx="27" cy="17" r="7" fill="#ee8a57" /><circle cx="17" cy="18" r="7" fill="#f7c53c" /><circle cx="12" cy="24" r="4.500" fill="#f3a47a" /><circle cx="24" cy="26" r="4.500" fill="#f6b2b0" /><circle cx="17" cy="18" r="2.500" fill="#e8982a" /><circle cx="27" cy="17" r="2.500" fill="#f9b98c" /><circle cx="24" cy="6" r="2" fill="#f9c9a0" />
          </svg>
        </label>
        {apps.map((app) => (
          <button key={app} aria-label={app} className={`relative flex h-[50px] items-center justify-center ${app === "Power BI" ? "mx-0.5 w-[50px] rounded-md border border-white/10 bg-white/10" : "w-[55px]"}`}>
            <AppIcon name={app} />
            {running.includes(app) && <span className="absolute bottom-0.5 h-1 w-2 rounded-full bg-[#9aa0a6]" />}
            {app === "Power BI" && <span className="absolute bottom-0 h-1 w-5 rounded-full bg-[#4cc2ff]" />}
          </button>
        ))}
      </div>
      <div className="flex items-center justify-end pr-6">
        <svg viewBox="0 0 14 8" className="h-2 w-3.5" fill="none" stroke="#fff" strokeWidth="1.700" aria-hidden="true"><path d="m.8 7.200 6.200-6 6.200 6" /></svg>
        <span className="mr-[22px] ml-[26px]">ENG</span>
        <svg viewBox="0 0 20 16" className="h-4 w-5" fill="none" stroke="#fff" strokeWidth="1.500" aria-hidden="true"><path d="M.7 6C6-.5 14-.5 19.300 6M3.500 8.800c4-4.600 9-4.600 13 0M6.400 11.400c2.400-2.600 4.800-2.600 7.200 0" /><circle cx="10" cy="13.700" r="1.400" fill="#fff" /></svg>
        <svg viewBox="0 0 20 18" className="ml-2.5 h-[18px] w-5" fill="none" stroke="#fff" strokeWidth="1.300" aria-hidden="true"><path d="M1 6h3l5-4.500v15L4 12H1zM12 6q2 3 0 6M14.500 3.500q4 5.500 0 11M17 1q5.500 8 0 16" /></svg>
        <svg viewBox="0 0 20 18" className="mr-[27px] ml-2.5 h-[18px] w-5" aria-hidden="true"><rect x="1" y="4.500" width="16.500" height="11.500" rx="2.500" fill="none" stroke="#fff" strokeWidth="1.400" /><path d="M18.500 8v4.500h1.500V8zM9 6.500h7v7.500H3.500z" fill="#fff" /><path d="M4.500 0 1 6.500h2.500L2 11l5-6H4.800L6.500 0z" fill="#fff" stroke="#152834" strokeWidth=".6" /></svg>
        <time className="text-right">11:10 PM<br />5/11/2025</time>
      </div>
    </div>
  );
}

export default function App() {
  return (
    <div className="relative flex min-h-screen flex-col overflow-hidden bg-white font-['Open_Sans','Noto_Sans',sans-serif]">
      <TitleBar />
      <MenuBar />
      <Ribbon />
      <main className="flex flex-1">
        <ViewRail />
        <div className="flex min-w-0 flex-1 flex-col">
          <div className="flex flex-1">
            <div className="flex min-w-0 flex-1 flex-col"><ReportPage /></div>
            <SidePane title="Filters" className="w-[41px] border-[#b3b0ad] bg-white pt-[15px]">
              <svg viewBox="0 0 15 16" className="mt-5 mb-2.5 ml-1 h-4 w-[15px]" fill="none" stroke="#252423" strokeWidth="1.500" aria-hidden="true"><path d="M14 1v14L7.500 9.800H1V6.200h6.500z" /></svg>
            </SidePane>
          </div>
          <PageTabs />
        </div>
        <SidePane title="Visualizations" className="w-11 gap-[19px] border-[#e1dfdd] bg-[#f3f2f1] pt-4 pr-0.5" />
        <SidePane title="Data" className="w-[43px] gap-[19px] border-[#e1dfdd] bg-[#f3f2f1] pt-4 pr-0.5" />
      </main>
      <StatusBar />
      <Taskbar />
      <div className="pointer-events-none absolute right-[88px] bottom-[107px] z-20 text-[#8a8886]/50">
        <p className="text-[24px] leading-9">Activate Windows</p>
        <p className="text-[17px] leading-6">Go to Settings to activate Windows.</p>
      </div>
    </div>
  );
}
